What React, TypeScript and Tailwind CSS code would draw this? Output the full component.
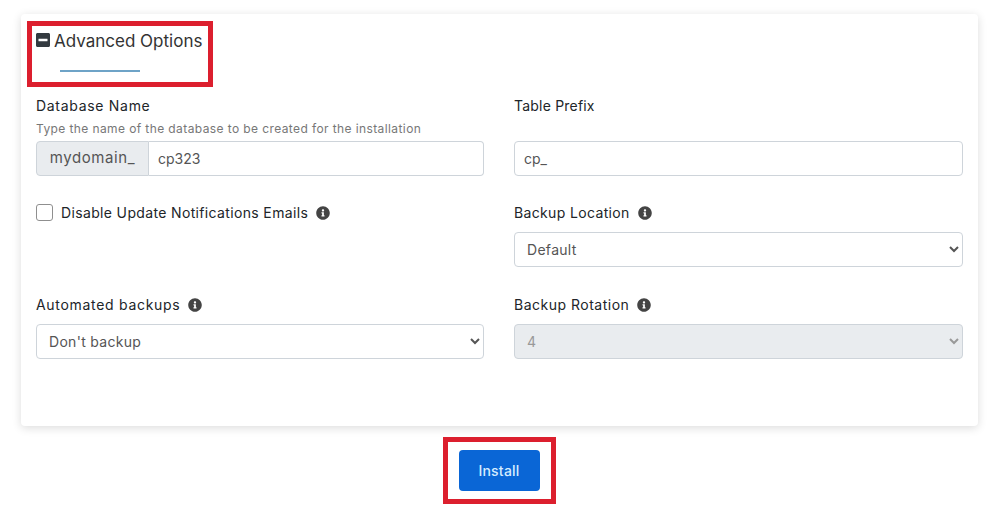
import { FaInfoCircle, FaMinusSquare } from 'react-icons/fa';

const font = "font-['Inter','Noto_Sans',sans-serif]";

function FieldLabel({ text, info, tracking = 'tracking-[0.35px]' }: { text: string; info?: boolean; tracking?: string }) {
    return (
        <div className={`flex h-[19px] items-center text-[14px] text-[#212529] ${tracking}`}>
            <span>{text}</span>
            {info && <FaInfoCircle className="ml-[8px] text-[14px] text-[#444444]" />}
        </div>
    );
}

function Select({ value, disabled }: { value: string; disabled?: boolean }) {
    return (
        <select
            value={value}
            disabled={disabled}
            onChange={() => {}}
            className={`h-[35px] w-full rounded-[4px] border border-[#ced4da] pl-[8px] text-[14px] tracking-[0.3px] ${
                disabled ? 'bg-[#e9ecef] text-[#999999] opacity-100' : 'bg-white text-[#555555]'
            }`}
        >
            <option value={value}>{value}</option>
        </select>
    );
}

export default function App() {
    return (
        <div className={`${font} relative h-[520px] w-[1000px] overflow-hidden bg-white pt-[14px]`}>
            <div className="mx-[21px] h-[412px] w-[957px] rounded-[4px] bg-white px-[15px] shadow-[0_2px_10px_rgba(0,0,0,0.14)]">
                {/* heading */}
                <div className="flex h-[56px] items-start pt-[17px]">
                    <FaMinusSquare className="-ml-[1px] mt-[1px] text-[16px] text-[#343a40]" />
                    <span className="ml-[3px] text-[17px] leading-[20px] text-[#333333]">Advanced Options</span>
                </div>
                <div className="ml-[24px] h-[2px] w-[80px] bg-[#6ea3c7]" />

                <div className="mt-[24px] grid grid-cols-[448px_449px] gap-x-[30px]">
                    <div className="h-[107px]">
                        <FieldLabel text="Database Name" tracking="tracking-[0.7px]" />
                        <div className="mt-[6px] h-[15px] text-[12px] leading-[15px] tracking-[0.4px] text-[#777777]">
                            Type the name of the database to be created for the installation
                        </div>
                        <div className="mt-[5px] flex h-[35px] text-[14px]">
                            <span className="flex w-[113px] items-center justify-center rounded-l-[4px] border border-[#ced4da] bg-[#e9ecef] text-[15px] tracking-[0.6px] text-[#555555]">
                                mydomain_
                            </span>
                            <input
                                readOnly
                                value="cp323"
                                className="min-w-0 flex-1 rounded-r-[4px] border border-l-0 border-[#ced4da] px-[9px] text-[#555555]"
                            />
                        </div>
                    </div>
                    <div className="h-[107px]">
                        <FieldLabel text="Table Prefix" tracking="tracking-[0.2px]" />
                        <input
                            readOnly
                            value="cp_"
                            className="mt-[26px] h-[35px] w-full rounded-[4px] border border-[#ced4da] px-[9px] text-[14px] text-[#555555]"
                        />
                    </div>

                    <div className="h-[92px]">
                        <div className="flex h-[18px] items-center pt-[1px]">
                            <input
                                type="checkbox"
                                className="h-[17px] w-[17px] appearance-none rounded-[3px] border border-[#8f8f8f] bg-white"
                            />
                            <span className="ml-[8px] flex items-center">
                                <FieldLabel text="Disable Update Notifications Emails" info />
                            </span>
                        </div>
                    </div>
                    <div className="h-[92px]">
                        <FieldLabel text="Backup Location" info />
                        <div className="mt-[10px]">
                            <Select value="Default" />
                        </div>
                    </div>

                    <div>
                        <FieldLabel text="Automated backups" info tracking="tracking-[0.7px]" />
                        <div className="mt-[10px]">
                            <Select value="Don't backup" />
                        </div>
                    </div>
                    <div>
                        <FieldLabel text="Backup Rotation" info tracking="tracking-[0.5px]" />
                        <div className="mt-[10px]">
                            <Select value="4" disabled />
                        </div>
                    </div>
                </div>
            </div>

            <div className="mt-[24px] flex justify-center pr-[2px]">
                <button
                    type="button"
                    className="h-[41px] w-[81px] rounded-[4px] bg-[#0a66d6] text-[14px] font-medium tracking-[0.2px] text-[#d5ecff]"
                >
                    Install
                </button>
            </div>

            {/* annotation boxes drawn over the screenshot */}
            <div className="absolute left-[27px] top-[21px] h-[66px] w-[186px] border-[5px] border-[#dc1f2e]" />
            <div className="absolute left-[443px] top-[437px] h-[67px] w-[113px] border-[5px] border-[#dc1f2e]" />
        </div>
    );
}
